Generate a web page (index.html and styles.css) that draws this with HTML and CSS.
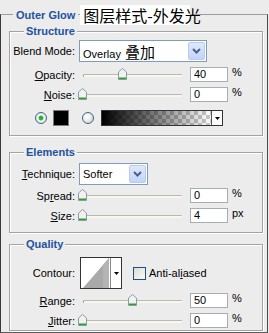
FILE: index.html
```html
<!DOCTYPE html>
<html>
<head>
<meta charset="utf-8">
<link rel="stylesheet" href="styles.css">
</head>
<body>
<div class="panel">
  <div class="title-row">
    <span class="legend">Outer Glow</span>
    <span class="cn-title">图层样式-外发光</span>
  </div>

  <div class="group structure">
    <div class="legend">Structure</div>
    <div class="row row-select">
      <span class="label">Blend Mode:</span>
      <div class="select select-blend">
        <span class="val">Overlay<span class="cn">叠加</span></span>
        <span class="btn"><svg width="9" height="6" viewBox="0 0 9 6"><path d="M1 1 L4.5 4.5 L8 1" fill="none" stroke="#4d6185" stroke-width="2"/></svg></span>
      </div>
    </div>
    <div class="row row-first">
      <span class="label"><u>O</u>pacity:</span>
      <div class="slider"><div class="track"></div><span class="thumb" style="left:39.6px"><svg width="9" height="12" viewBox="0 0 9 12"><path d="M0.5 4 L4.5 0.5 L8.5 4 V11.5 H0.5Z" fill="#f1f1ef" stroke="#8d99a6"/><path d="M1 10.25 H8" stroke="#22a822" stroke-width="1.5"/></svg></span></div>
      <span class="num">40</span><span class="unit">%</span>
    </div>
    <div class="row row-next">
      <span class="label"><u>N</u>oise:</span>
      <div class="slider"><div class="track"></div><span class="thumb" style="left:0px"><svg width="9" height="12" viewBox="0 0 9 12"><path d="M0.5 4 L4.5 0.5 L8.5 4 V11.5 H0.5Z" fill="#f1f1ef" stroke="#8d99a6"/><path d="M1 10.25 H8" stroke="#22a822" stroke-width="1.5"/></svg></span></div>
      <span class="num">0</span><span class="unit">%</span>
    </div>
    <div class="color-row">
      <span class="radio checked"></span>
      <span class="swatch"></span>
      <span class="radio radio-2"></span>
      <div class="gradient-box">
        <span class="gradient"></span>
        <span class="drop"><svg width="5" height="3" viewBox="0 0 5 3"><path d="M0 0 H5 L2.5 3Z" fill="#000"/></svg></span>
      </div>
    </div>
  </div>

  <div class="group elements">
    <div class="legend">Elements</div>
    <div class="row row-select row-tech">
      <span class="label"><u>T</u>echnique:</span>
      <div class="select select-tech">
        <span class="val">Softer</span>
        <span class="btn"><svg width="9" height="6" viewBox="0 0 9 6"><path d="M1 1 L4.5 4.5 L8 1" fill="none" stroke="#4d6185" stroke-width="2"/></svg></span>
      </div>
    </div>
    <div class="row row-spread">
      <span class="label">Sp<u>r</u>ead:</span>
      <div class="slider"><div class="track"></div><span class="thumb" style="left:0px"><svg width="9" height="12" viewBox="0 0 9 12"><path d="M0.5 4 L4.5 0.5 L8.5 4 V11.5 H0.5Z" fill="#f1f1ef" stroke="#8d99a6"/><path d="M1 10.25 H8" stroke="#22a822" stroke-width="1.5"/></svg></span></div>
      <span class="num">0</span><span class="unit">%</span>
    </div>
    <div class="row row-next">
      <span class="label"><u>S</u>ize:</span>
      <div class="slider"><div class="track"></div><span class="thumb" style="left:0px"><svg width="9" height="12" viewBox="0 0 9 12"><path d="M0.5 4 L4.5 0.5 L8.5 4 V11.5 H0.5Z" fill="#f1f1ef" stroke="#8d99a6"/><path d="M1 10.25 H8" stroke="#22a822" stroke-width="1.5"/></svg></span></div>
      <span class="num">4</span><span class="unit">px</span>
    </div>
  </div>

  <div class="group quality">
    <div class="legend">Quality</div>
    <div class="row row-contour">
      <span class="label">Contour:</span>
      <div class="contour">
        <span class="preview"><svg width="29" height="30" viewBox="0 0 29 30"><rect width="29" height="30" fill="#fff"/><path d="M2 30 L28 0 V30Z" fill="#a9a9a9"/><path d="M22 7 L28 0 V30 H22Z" fill="#b4b4b4"/></svg></span>
        <span class="drop"><svg width="5" height="3" viewBox="0 0 5 3"><path d="M0 0 H5 L2.5 3Z" fill="#000"/></svg></span>
      </div>
      <span class="check"></span>
      <span class="check-label">Anti-al<u>i</u>ased</span>
    </div>
    <div class="row row-range">
      <span class="label"><u>R</u>ange:</span>
      <div class="slider"><div class="track"></div><span class="thumb" style="left:49.5px"><svg width="9" height="12" viewBox="0 0 9 12"><path d="M0.5 4 L4.5 0.5 L8.5 4 V11.5 H0.5Z" fill="#f1f1ef" stroke="#8d99a6"/><path d="M1 10.25 H8" stroke="#22a822" stroke-width="1.5"/></svg></span></div>
      <span class="num">50</span><span class="unit">%</span>
    </div>
    <div class="row row-next">
      <span class="label"><u>J</u>itter:</span>
      <div class="slider"><div class="track"></div><span class="thumb" style="left:0px"><svg width="9" height="12" viewBox="0 0 9 12"><path d="M0.5 4 L4.5 0.5 L8.5 4 V11.5 H0.5Z" fill="#f1f1ef" stroke="#8d99a6"/><path d="M1 10.25 H8" stroke="#22a822" stroke-width="1.5"/></svg></span></div>
      <span class="num">0</span><span class="unit">%</span>
    </div>
  </div>
</div>
</body>
</html>
```

FILE: styles.css
```css
* { box-sizing: border-box; }
html, body { margin: 0; padding: 0; }
body {
  width: 269px;
  height: 333px;
  overflow: hidden;
  background: #ececec;
  font-family: "Liberation Sans", Arial, sans-serif;
  font-size: 11px;
  color: #000;
}
u { text-decoration: underline; text-underline-offset: 1px; }

.panel {
  margin-top: 14px;
  width: 268px;
  height: 319px;
  border-top: 1px solid #9c9c9c;
  border-left: 1px solid #3a3a3a;
  border-right: 1px solid #4a4a4a;
  border-bottom: 1px solid #5a5a5a;
}

.title-row {
  display: flex;
  align-items: center;
  height: 22px;
  margin-top: -11px;
  padding-left: 12px;
}

.legend {
  background: #ececec;
  color: #23529f;
  font-weight: bold;
  padding: 0 3px;
  line-height: 13px;
}

.cn-title {
  margin-left: 2px;
  width: 110px;
  height: 20px;
  background: #fff;
  padding-left: 3px;
  font-family: "Noto Sans CJK SC", sans-serif;
  font-size: 16px;
  line-height: 20px;
  color: #000;
  white-space: nowrap;
}

.group {
  margin: 5px 4px 0 8px;
  border: 1px solid #a3a3a3;
  box-shadow: inset 1px 1px 0 #fff, 1px 1px 0 #fff;
}
.group > .legend {
  width: fit-content;
  margin-top: -7px;
  margin-left: 14px;
  padding: 0 2px;
}
.structure { padding-bottom: 9px; }
.elements { margin-top: 16px; padding-bottom: 9px; }
.quality { margin-top: 11px; padding-bottom: 2px; }

.row {
  display: flex;
  align-items: center;
  height: 15px;
}
.row-select { height: 22px; margin-top: 2px; }
.row-tech { margin-top: 4px; }
.row-first { margin-top: 5px; }
.row-next { margin-top: 5px; }
.row-spread { margin-top: 3px; }
.row-contour { height: 32px; margin-top: 6px; }
.row-range { margin-top: 4px; }

.label {
  flex: none;
  width: 65px;
  text-align: right;
  white-space: nowrap;
}

.select {
  flex: none;
  margin-left: 4px;
  height: 22px;
  border: 1px solid #7f9db9;
  background: #fff;
  display: flex;
  align-items: center;
  padding-right: 1px;
}
.select-blend { width: 128px; }
.select-tech { width: 69px; }
.select .val { flex: 1; padding-left: 3px; white-space: nowrap; }
.select .cn {
  font-family: "Noto Sans CJK SC", sans-serif;
  font-size: 15px;
  margin-left: 4px;
}
.select .btn {
  flex: none;
  width: 17px;
  height: 18px;
  border: 1px solid #b8cbf2;
  border-radius: 2px;
  background: linear-gradient(#dfe8fc, #c3d4f8);
  display: flex;
  align-items: center;
  justify-content: center;
}

.slider {
  flex: none;
  position: relative;
  margin-left: 3px;
  width: 108px;
  height: 15px;
}
.track {
  margin: 7px 0 0 5px;
  width: 99px;
  height: 3px;
  border-top: 1px solid #b9b9b2;
  border-left: 1px solid #9a9a94;
  background: #f7f7f0;
  border-radius: 1px;
}
.thumb {
  position: absolute;
  top: 1px;
  width: 9px;
  height: 12px;
  display: block;
  line-height: 0;
}

.num {
  flex: none;
  margin-left: 4px;
  width: 38px;
  height: 15px;
  border: 1px solid #a6adb5;
  background: #fff;
  padding-left: 3px;
  line-height: 13px;
}
.unit {
  align-self: flex-start;
  margin-left: 4px;
  line-height: 11px;
}

.color-row {
  display: flex;
  align-items: center;
  height: 16px;
  margin-top: 8px;
  padding-left: 25px;
}
.radio {
  flex: none;
  width: 12px;
  height: 12px;
  border-radius: 50%;
  border: 1px solid #3d6590;
  background: radial-gradient(circle at 40% 40%, #ffffff 0, #f2f2ee 3px, #d9d9d2 6px);
}
.radio.checked {
  background: radial-gradient(circle at center, #1aa51a 0, #33c033 2px, #ffffff 3px, #f0f0ec 4px, #d9d9d2 6px);
}
.radio-2 { margin-left: 13px; }
.swatch {
  flex: none;
  margin-left: 6px;
  width: 16px;
  height: 16px;
  background: #000;
  border: 1px solid #7a7a7a;
}
.gradient-box {
  flex: none;
  margin-left: 7px;
  width: 122px;
  height: 16px;
  border: 1px solid #333;
  display: flex;
}
.gradient {
  flex: 1;
  background-image:
    linear-gradient(to right, #000, rgba(0,0,0,0)),
    repeating-conic-gradient(#c8c8c8 0 25%, #fff 0 50%);
  background-size: 100% 100%, 8px 8px;
}
.gradient-box .drop {
  flex: none;
  width: 11px;
  border-left: 1px solid #555;
  background: #fff;
  display: flex;
  align-items: center;
  justify-content: center;
}

.contour {
  flex: none;
  margin-left: 5px;
  width: 42px;
  height: 32px;
  border: 1px solid #333;
  background: #fff;
  display: flex;
}
.contour .preview { flex: none; width: 29px; height: 30px; line-height: 0; }
.contour .drop {
  flex: 1;
  display: flex;
  align-items: center;
  justify-content: center;
  border-left: 1px solid #8a8a8a;
}
.check {
  flex: none;
  margin-left: 11px;
  width: 13px;
  height: 13px;
  border: 1px solid #1c5180;
  background: linear-gradient(135deg, #dcdcd6, #fafaf8);
}
.check-label { margin-left: 3px; white-space: nowrap; }
```
